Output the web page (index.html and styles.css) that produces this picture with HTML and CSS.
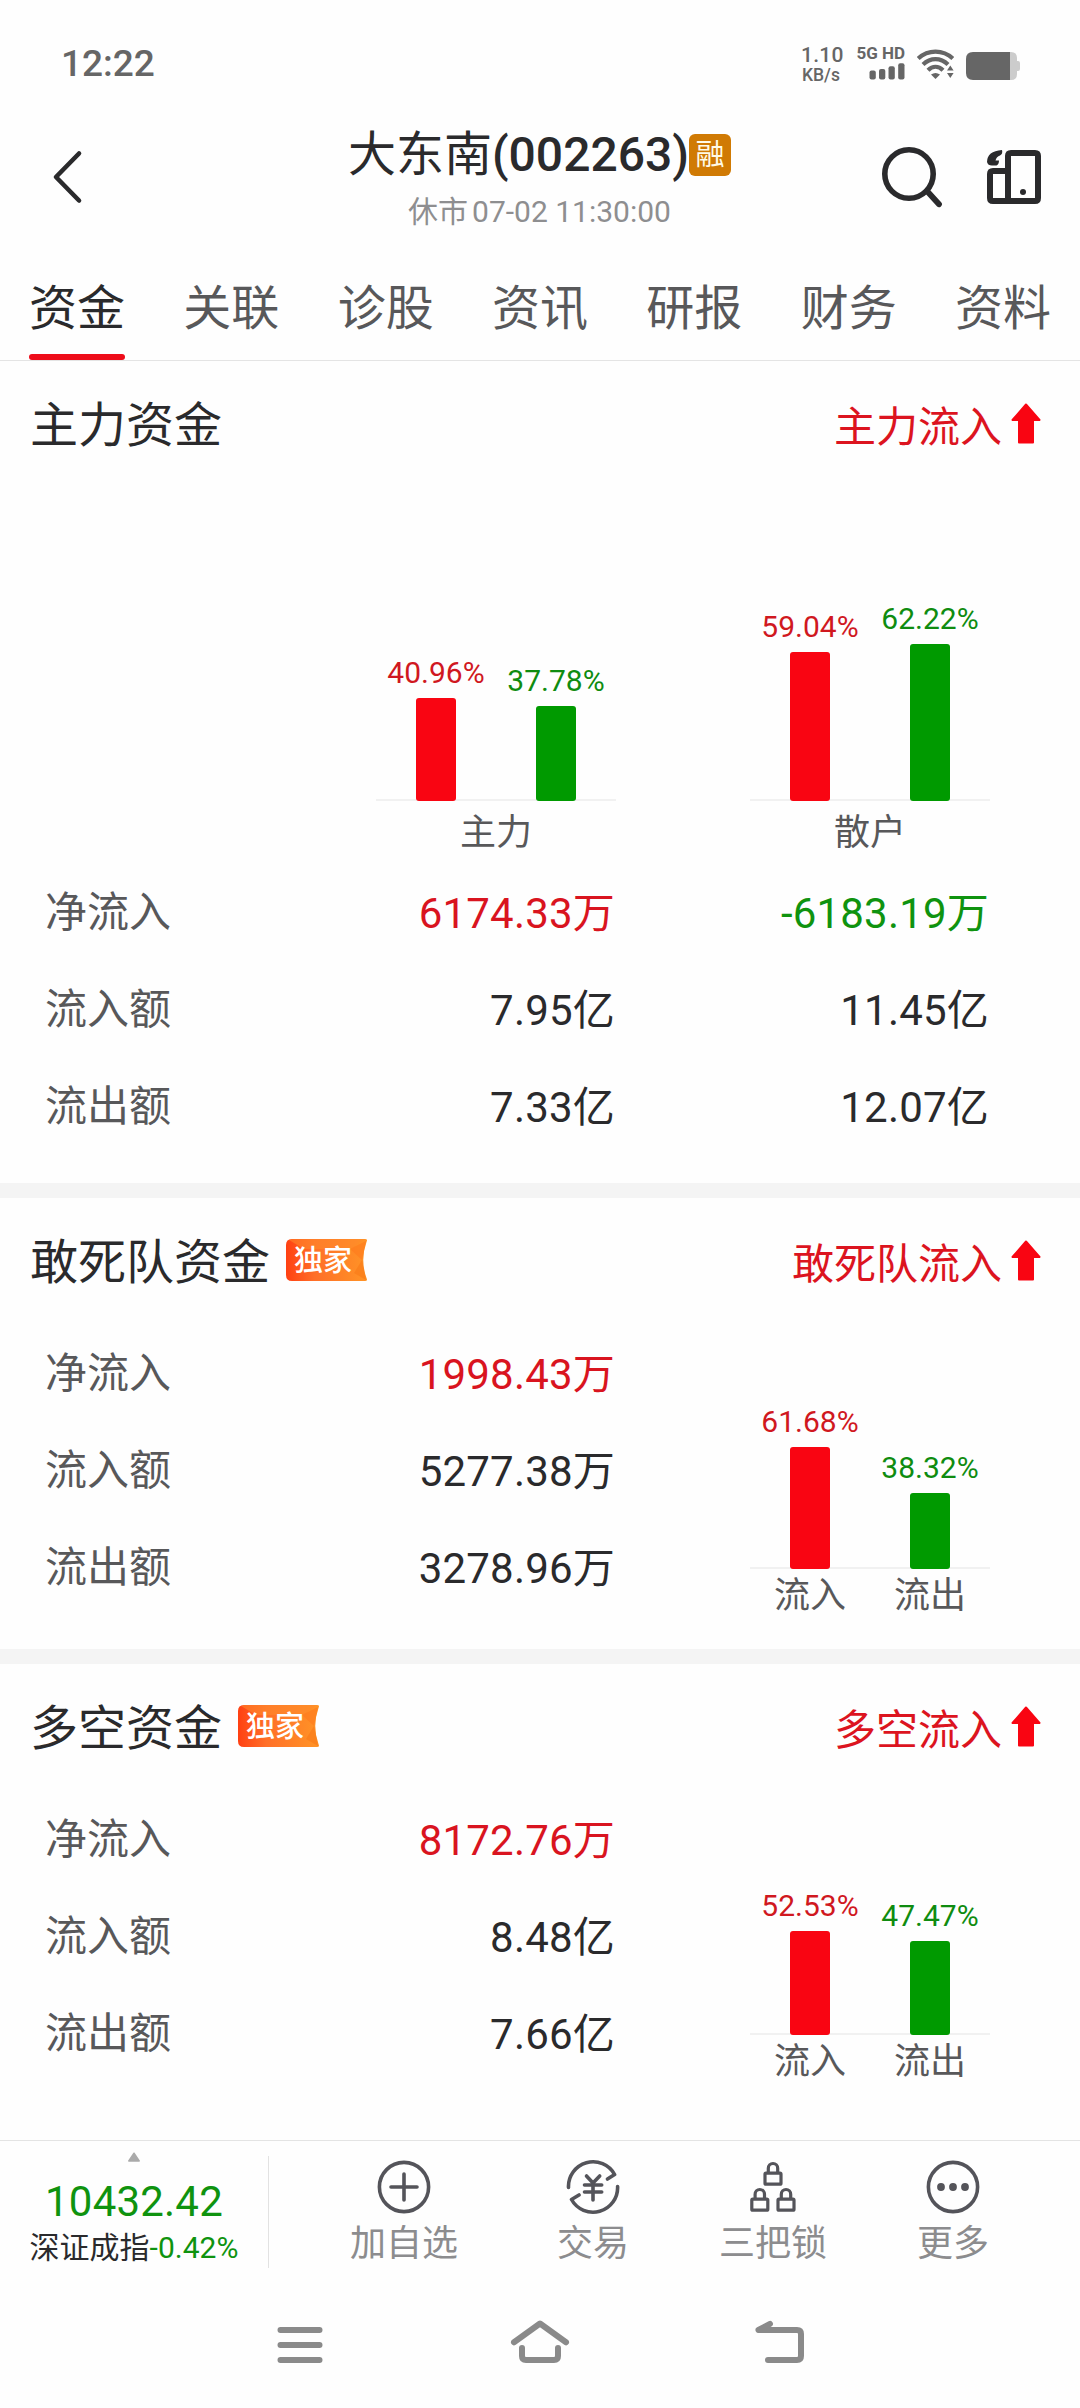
FILE: index.html
```html
<!DOCTYPE html>
<html lang="zh-CN">
<head>
    <meta charset="UTF-8">
    <meta name="viewport" content="width=device-width, initial-scale=1.0">
    <title>大东南(002263)</title>
    <link rel="stylesheet" href="styles.css">
</head>
<body>
    <!-- shared shapes -->
    <svg class="defs" width="0" height="0">
        <defs>
            <linearGradient id="tagFill" x1="0" y1="0" x2="1" y2="0">
                <stop offset="0" stop-color="#ff4012"/>
                <stop offset="0.35" stop-color="#ff6f28"/>
                <stop offset="1" stop-color="#ff9426"/>
            </linearGradient>
        </defs>
        <symbol id="arrowUp" viewBox="0 0 30 41">
            <path d="M15 1.5 28.5 17H22V39.5H8V17H1.5Z" fill="#f90512" stroke="#f90512" stroke-width="2" stroke-linejoin="round"/>
        </symbol>
        <symbol id="tagShape" viewBox="0 0 81 42">
            <path d="M6 0H79Q82 0 80.5 3Q74 21 80.5 39Q82 42 79 42H6Q0 42 0 36V6Q0 0 6 0Z" fill="url(#tagFill)"/>
            <path d="M3 1 18 10H64L78 0H6Z" fill="#ff8a2c" opacity=".55"/>
            <path d="M80 2 64 10 76 21Z" fill="#ff7a1c" opacity=".6"/>
            <path d="M76 21 68 34 80 41Z" fill="#f97c1a" opacity=".7"/>
        </symbol>
        <symbol id="lock" viewBox="0 0 22 28">
            <rect x="2.5" y="13.2" width="16" height="11" rx="1" fill="none" stroke="#54545a" stroke-width="3.2"/>
            <path d="M5.8 12V8.4a4.7 4.9 0 0 1 9.4 0V12" fill="none" stroke="#54545a" stroke-width="3.2"/>
        </symbol>
    </svg>

    <div class="status">
        <div class="time">12:22</div>
        <div class="speed">
            <span class="speed-num">1.10</span>
            <span class="speed-unit">KB/s</span>
        </div>
        <div class="signal">
            <span>5G HD</span>
            <svg width="36" height="18" viewBox="0 0 36 18" fill="#666">
                <rect x="0.5" y="8.5" width="6.3" height="9" rx="2"/>
                <rect x="10" y="7" width="6.3" height="10.5" rx="2"/>
                <rect x="19.5" y="4.3" width="6.3" height="13.2" rx="2"/>
                <rect x="29.2" y="1.2" width="6.3" height="16.3" rx="2"/>
            </svg>
        </div>
        <svg class="wifi" width="38" height="30" viewBox="0 0 38 30" fill="none" stroke="#666" stroke-width="4.2">
            <path d="M1.2 9.5C11 0.2 26 0.2 35.8 9.5"/>
            <path d="M6 15.6C13.500 8.400 23.500 8.400 31 15.6"/>
            <path d="M11 21.2C15.500 16.600 21.500 16.600 26 21.2"/>
            <path d="M14 25.5Q18.5 22.5 23 25.5L18.5 30Z" fill="#666" stroke="none"/>
            <path d="M30 21.5 33.3 16.5 36.6 21.5ZM30 24 36.6 24 33.3 29Z" fill="#666" stroke="none"/>
        </svg>
        <svg class="battery" width="54" height="28" viewBox="0 0 54 28">
            <path d="M42 0h3q6 0 6 6v3h1q2 0 2 2v6q0 2-2 2h-1v3q0 6-6 6h-3Z" fill="#ccc"/>
            <path d="M7 0H44V28H7Q0 28 0 21V7Q0 0 7 0Z" fill="#666"/>
        </svg>
    </div>

    <header>
        <svg class="back" width="32" height="56" viewBox="0 0 32 56">
            <path d="M28 4.5 5 28 28 51.5" fill="none" stroke="#2a2a2c" stroke-width="4.6" stroke-linecap="round" stroke-linejoin="round"/>
        </svg>
        <div class="stock">
            <h1>大东南<b>(002263)</b><span class="margin-mark">融</span></h1>
            <p>休市<span>07-02 11:30:00</span></p>
        </div>
        <div class="tools">
            <svg width="62" height="62" viewBox="0 0 62 62" fill="none" stroke="#2a2a2c">
                <circle cx="28" cy="28" r="24.2" stroke-width="5.6"/>
                <path d="M46 45 58 58.3" stroke-width="5.8" stroke-linecap="round"/>
            </svg>
            <svg width="54" height="54" viewBox="0 0 54 54" fill="none" stroke="#2a2a2c" stroke-width="6">
                <path d="M21 51V6Q21 3 24 3H48Q51 3 51 6V48Q51 51 48 51H6Q3 51 3 48V24Q3 21 6 21H20"/>
                <circle cx="36" cy="42" r="3" fill="#2a2a2c" stroke="none"/>
                <path d="M15 0Q0 1 0 12Q1 16 6 15.5H9.5Q12 14.5 12 10.5H8.5Q9.5 6.5 13 5.5Q16 4 15 0Z" fill="#2a2a2c" stroke="none"/>
            </svg>
        </div>
    </header>

    <nav class="tabs">
        <a class="active">资金</a>
        <a>关联</a>
        <a>诊股</a>
        <a>资讯</a>
        <a>研报</a>
        <a>财务</a>
        <a>资料</a>
    </nav>

    <main>
        <section class="main-fund">
            <div class="head">
                <h2>主力资金</h2>
                <div class="flow">主力流入<svg width="30" height="41"><use href="#arrowUp"/></svg></div>
            </div>
            <div class="charts">
                <div class="chart">
                    <div class="plot">
                        <div class="col red"><span>40.96%</span><i style="height: 103.2px"></i></div>
                        <div class="col green"><span>37.78%</span><i style="height: 95.2px"></i></div>
                    </div>
                    <div class="names"><span>主力</span></div>
                </div>
                <div class="chart">
                    <div class="plot">
                        <div class="col red"><span>59.04%</span><i style="height: 148.8px"></i></div>
                        <div class="col green"><span>62.22%</span><i style="height: 156.8px"></i></div>
                    </div>
                    <div class="names"><span>散户</span></div>
                </div>
            </div>
            <div class="rows">
                <div class="row"><label>净流入</label><span class="up">6174.33万</span><span class="down">-6183.19万</span></div>
                <div class="row"><label>流入额</label><span>7.95亿</span><span>11.45亿</span></div>
                <div class="row"><label>流出额</label><span>7.33亿</span><span>12.07亿</span></div>
            </div>
        </section>

        <section class="sub-fund">
            <div class="head">
                <h2>敢死队资金</h2>
                <div class="tag"><svg width="81" height="42"><use href="#tagShape"/></svg><span>独家</span></div>
                <div class="flow">敢死队流入<svg width="30" height="41"><use href="#arrowUp"/></svg></div>
            </div>
            <div class="split">
                <div class="rows">
                    <div class="row"><label>净流入</label><span class="up">1998.43万</span></div>
                    <div class="row"><label>流入额</label><span>5277.38万</span></div>
                    <div class="row"><label>流出额</label><span>3278.96万</span></div>
                </div>
                <div class="chart">
                    <div class="plot">
                        <div class="col red"><span>61.68%</span><i style="height: 121.8px"></i></div>
                        <div class="col green"><span>38.32%</span><i style="height: 75.7px"></i></div>
                    </div>
                    <div class="names"><span>流入</span><span>流出</span></div>
                </div>
            </div>
        </section>

        <section class="sub-fund">
            <div class="head">
                <h2>多空资金</h2>
                <div class="tag"><svg width="81" height="42"><use href="#tagShape"/></svg><span>独家</span></div>
                <div class="flow">多空流入<svg width="30" height="41"><use href="#arrowUp"/></svg></div>
            </div>
            <div class="split">
                <div class="rows">
                    <div class="row"><label>净流入</label><span class="up">8172.76万</span></div>
                    <div class="row"><label>流入额</label><span>8.48亿</span></div>
                    <div class="row"><label>流出额</label><span>7.66亿</span></div>
                </div>
                <div class="chart">
                    <div class="plot">
                        <div class="col red"><span>52.53%</span><i style="height: 103.7px"></i></div>
                        <div class="col green"><span>47.47%</span><i style="height: 93.8px"></i></div>
                    </div>
                    <div class="names"><span>流入</span><span>流出</span></div>
                </div>
            </div>
        </section>
    </main>

    <footer>
        <div class="index">
            <svg width="12" height="10" viewBox="0 0 12 10"><path d="M6 1.200 11.200 9H0.800Z" fill="#aaa" stroke="#aaa" stroke-width="1.500" stroke-linejoin="round"/></svg>
            <div class="index-num">10432.42</div>
            <div class="index-name">深证成指<span>-0.42%</span></div>
        </div>
        <div class="actions">
            <div class="action">
                <svg width="56" height="56" viewBox="0 0 56 56" fill="none" stroke="#54545a" stroke-width="3.6" stroke-linecap="round">
                    <circle cx="28" cy="28" r="24.6"/>
                    <path d="M28 15V41M15 28H41"/>
                </svg>
                <span>加自选</span>
            </div>
            <div class="action">
                <svg width="56" height="56" viewBox="0 0 56 56" fill="none" stroke="#54545a" stroke-width="3.6" stroke-linecap="round" stroke-linejoin="round">
                    <path d="M3.5 28.5A24.6 24.6 0 0 1 49.6 15.5L42.5 20"/>
                    <path d="M52.6 27.5A24.6 24.6 0 0 1 6.5 40.5L14 36"/>
                    <path d="M21.5 17 28 24 34.7 17M28 24V41M19.5 26H36.7M19.5 33H36.7"/>
                </svg>
                <span>交易</span>
            </div>
            <div class="action">
                <svg width="56" height="56" viewBox="0 0 56 56">
                    <use href="#lock" x="17.5" y="1" width="22" height="28"/>
                    <use href="#lock" x="4.3" y="27" width="22" height="28"/>
                    <use href="#lock" x="30.5" y="27" width="22" height="28"/>
                </svg>
                <span>三把锁</span>
            </div>
            <div class="action">
                <svg width="56" height="56" viewBox="0 0 56 56" fill="#54545a">
                    <circle cx="28" cy="28" r="24.6" fill="none" stroke="#54545a" stroke-width="3.6"/>
                    <circle cx="16" cy="28" r="3.9"/>
                    <circle cx="28" cy="28" r="3.9"/>
                    <circle cx="40" cy="28" r="3.9"/>
                </svg>
                <span>更多</span>
            </div>
        </div>
    </footer>

    <!-- system navigation -->
    <div class="sysnav">
        <svg width="60" height="50" viewBox="0 0 60 50">
            <path d="M10.5 10H49.5M10.5 25H49.5M10.5 40H49.5"/>
        </svg>
        <svg width="60" height="50" viewBox="0 0 60 50">
            <path d="M4 22.3 30 3.5 56 22.3M12 28V36Q12 40 16 40H44Q48 40 48 36V28"/>
        </svg>
        <svg width="60" height="50" viewBox="0 0 60 50">
            <path d="M20 3.8 8.5 10H47Q51 10 51 14V36Q51 40 47 40H18"/>
        </svg>
    </div>
</body>
</html>
```

FILE: styles.css
```css
* {
    margin: 0;
    padding: 0;
    box-sizing: border-box;
}

body {
    width: 1080px;
    height: 2408px;
    font-family: Roboto, "Noto Sans CJK SC", sans-serif;
    background-color: #fefefe;
    color: #2a2a2c;
    overflow: hidden;
    display: flex;
    flex-direction: column;
}

svg {
    display: block;
    flex: none;
}

.defs {
    position: absolute;
}

/* status bar */
.status {
    height: 120px;
    padding: 44px 60px 0 61px;
    display: flex;
    align-items: flex-start;
    color: #666;
    font-weight: 500;
}

.time {
    font-size: 37px;
    line-height: 40px;
    margin-right: auto;
}

.speed {
    display: flex;
    flex-direction: column;
    width: 54px;
}

.speed-num {
    font-size: 21px;
    line-height: 22px;
    letter-spacing: 0.3px;
}

.speed-unit {
    font-size: 17.5px;
    line-height: 18px;
    padding-left: 1px;
}

.signal {
    display: flex;
    flex-direction: column;
    align-items: flex-end;
    width: 50px;
    margin-right: 12px;
    font-size: 17px;
    font-weight: 700;
    line-height: 18px;
    white-space: nowrap;
}

.wifi {
    margin: 5px 11px 0 0;
}

.battery {
    margin-top: 8px;
}

/* title bar */
header {
    height: 134px;
    padding: 0 39px 0 51px;
    display: flex;
    justify-content: space-between;
}

.back {
    margin-top: 29px;
}

.stock {
    margin-left: 115px;
    display: flex;
    flex-direction: column;
    align-items: center;
}

.stock h1 {
    display: flex;
    align-items: center;
    font-size: 48px;
    font-weight: 400;
    line-height: 60px;
    margin-top: 5px;
}

.stock h1 b {
    font-weight: 500;
}

.margin-mark {
    width: 42px;
    height: 42px;
    border-radius: 6px;
    background-color: #d07a04;
    color: #fffbe8;
    font-size: 29px;
    line-height: 42px;
    text-align: center;
}

.stock p {
    font-size: 30px;
    line-height: 36px;
    margin-top: 9px;
    color: #8e8e90;
}

.stock p span {
    margin-left: 4px;
}

.tools {
    display: flex;
    gap: 44px;
    margin-top: 26px;
}

.tools svg:last-child {
    margin-top: 4px;
}

/* tabs */
.tabs {
    height: 107px;
    padding: 0 29px;
    display: flex;
    justify-content: space-between;
    border-bottom: 1px solid #e4e4e4;
}

.tabs a {
    position: relative;
    font-size: 48px;
    line-height: 60px;
    padding-top: 25px;
    color: #58585a;
}

.tabs .active {
    color: #2a2a2c;
}

.tabs .active::after {
    content: "";
    position: absolute;
    left: 0;
    bottom: 0;
    width: 96px;
    height: 6px;
    border-radius: 3px;
    background-color: #ee0c1a;
}

/* fund sections */
main {
    height: 1779px;
    flex: none;
}

section {
    border-bottom: 15px solid #f4f4f4;
}

section:last-child {
    border-bottom: none;
}

.main-fund {
    height: 837px;
}

.sub-fund {
    height: 466px;
}

.head {
    height: 126px;
    padding: 0 39px 0 30px;
    display: flex;
    align-items: center;
}

.head h2 {
    font-size: 48px;
    font-weight: 400;
    line-height: 60px;
    padding-top: 4px;
}

.tag {
    position: relative;
    width: 81px;
    height: 42px;
    margin: -2px 0 0 16px;
    padding-left: 8px;
    color: #fff;
    font-size: 29px;
    font-weight: 500;
    line-height: 44px;
}

.tag svg {
    position: absolute;
    left: 0;
    top: 0;
}

.tag span {
    position: relative;
}

.flow {
    margin-left: auto;
    display: flex;
    align-items: center;
    gap: 9px;
    font-size: 42px;
    line-height: 50px;
    padding-top: 7px;
    color: #dc141f;
}

.flow svg {
    margin-top: -9px;
}

.charts {
    height: 377px;
    padding: 0 90px 0 376px;
    display: flex;
    justify-content: space-between;
}

.chart {
    width: 240px;
}

.plot {
    display: flex;
    align-items: flex-end;
    height: 314px;
    border-bottom: 2px solid #f1f1f1;
}

.col {
    width: 120px;
    margin-bottom: -2px;
    display: flex;
    flex-direction: column;
    align-items: center;
    font-size: 30px;
    line-height: 36px;
}

.col i {
    width: 40px;
    margin-top: 7px;
    border-radius: 3px;
}

.red {
    color: #d0181f;
}

.red i {
    background-color: #f90512;
}

.green {
    color: #0f8c10;
}

.green i {
    background-color: #009a00;
}

.names {
    display: flex;
    justify-content: space-around;
    margin-top: 11px;
    font-size: 36px;
    line-height: 42px;
    color: #58585a;
}

.row {
    height: 97px;
    padding: 0 90px 0 45px;
    display: flex;
    align-items: center;
    font-size: 42px;
    line-height: 50px;
}

.row label {
    width: 196px;
    color: #58585a;
}

.row span {
    width: 374px;
    padding-top: 3px;
    text-align: right;
    letter-spacing: 0.2px;
}

.row .up {
    color: #d9141f;
}

.row .down {
    color: #0f930f;
}

.split {
    display: flex;
    padding: 1px 90px 0 0;
    justify-content: space-between;
}

.split .row {
    padding-right: 0;
}

.split .plot {
    height: 244px;
}

.split .names {
    margin-top: 6px;
}

/* bottom toolbar */
footer {
    height: 150px;
    margin-top: auto;
    border-top: 1px solid #e4e4e4;
    display: flex;
}

.index {
    width: 269px;
    height: 112px;
    margin-top: 15px;
    border-right: 1px solid #e2e2e2;
    display: flex;
    flex-direction: column;
    align-items: center;
}

.index svg {
    margin-top: -4px;
}

.index-num {
    font-size: 42px;
    line-height: 50px;
    letter-spacing: 0.2px;
    margin-top: 15px;
    color: #0f930f;
}

.index-name {
    font-size: 30px;
    line-height: 36px;
    margin-top: 3px;
}

.index-name span {
    color: #0f930f;
}

.actions {
    flex: 1;
    padding: 18px 37px 0 36px;
    display: flex;
}

.action {
    width: 180px;
    display: flex;
    flex-direction: column;
    align-items: center;
    font-size: 36px;
    line-height: 42px;
    color: #8c8c8e;
}

.action:first-child {
    width: 198px;
}

.action span {
    margin-top: 8px;
}

.sysnav {
    height: 118px;
    padding: 30px 270px 0;
    display: flex;
    justify-content: space-between;
}

.sysnav svg {
    fill: none;
    stroke: #8a8a8a;
    stroke-width: 6;
    stroke-linecap: round;
    stroke-linejoin: round;
}
```
